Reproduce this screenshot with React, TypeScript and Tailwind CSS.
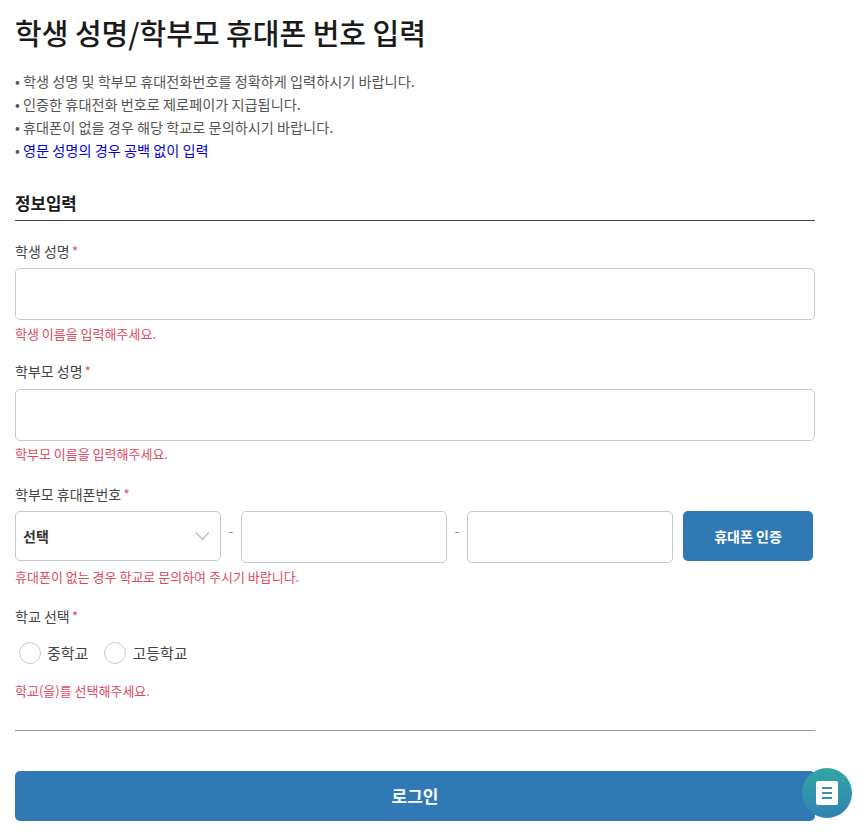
const font = { fontFamily: '"Noto Sans CJK KR", "Noto Sans", sans-serif' };

function Label({ text }: { text: string }) {
  return (
    <p className="text-[14px] leading-[20px] text-[#444]">
      {text}
      <span className="ml-[2px] text-[#e0566a]">*</span>
    </p>
  );
}

function Error({ text }: { text: string }) {
  return <p className="text-[13px] leading-[18px] text-[#e04a60]">{text}</p>;
}

function Radio({ text }: { text: string }) {
  return (
    <label className="flex items-center gap-[6px]">
      <span className="h-[22px] w-[22px] rounded-full border border-[#c9ccd4] bg-white" />
      <span className="text-[15px] leading-[22px] text-[#444]">{text}</span>
    </label>
  );
}

export default function App() {
  return (
    <div className="relative h-[833px] overflow-hidden bg-white pl-[15px]" style={font}>
      <div className="w-[800px]">
        <h1 className="pt-[11px] text-[29px] font-medium leading-[42px] text-[#1a1a1a]">
          학생 성명/학부모 휴대폰 번호 입력
        </h1>

        <ul className="mt-[17px] text-[14.2px] leading-[23px] text-[#555]">
          <li>• 학생 성명 및 학부모 휴대전화번호를 정확하게 입력하시기 바랍니다.</li>
          <li>• 인증한 휴대전화 번호로 제로페이가 지급됩니다.</li>
          <li>• 휴대폰이 없을 경우 해당 학교로 문의하시기 바랍니다.</li>
          <li>
            • <span className="text-[#0000e0]">영문 성명의 경우 공백 없이 입력</span>
          </li>
        </ul>

        <h2 className="mt-[29px] border-b border-[#444] pb-[5px] text-[16.8px] font-bold leading-[24px] text-[#1a1a1a]">
          정보입력
        </h2>

        <div className="mt-[20px]">
          <Label text="학생 성명" />
          <input className="mt-[7px] block h-[52px] w-full rounded-[5px] border border-[#c4c8d8] bg-white" />
          <div className="mt-[5px]">
            <Error text="학생 이름을 입력해주세요." />
          </div>
        </div>

        <div className="mt-[18px]">
          <Label text="학부모 성명" />
          <input className="mt-[8px] block h-[52px] w-full rounded-[5px] border border-[#c4c8d8] bg-white" />
          <div className="mt-[4px]">
            <Error text="학부모 이름을 입력해주세요." />
          </div>
        </div>

        <div className="mt-[21px]">
          <Label text="학부모 휴대폰번호" />
          <div className="mt-[7px] flex items-start">
            <div className="relative flex h-[50px] w-[206px] items-center rounded-[5px] border border-[#c4c8d8] bg-white pl-[7px] text-[14px] font-bold text-[#333]">
              선택
              <svg className="absolute right-[10px] top-[19px]" width="15" height="10" viewBox="0 0 15 10" fill="none">
                <path d="M1 1.5 L7.5 8.5 L14 1.5" stroke="#b8bcc8" strokeWidth="1.2" />
              </svg>
            </div>
            <span className="w-[20px] pt-[9px] text-center text-[14px] leading-[20px] text-[#888]">-</span>
            <input className="block h-[52px] w-[206px] rounded-[5px] border border-[#c4c8d8] bg-white" />
            <span className="w-[20px] pt-[9px] text-center text-[14px] leading-[20px] text-[#888]">-</span>
            <input className="block h-[52px] w-[206px] rounded-[5px] border border-[#c4c8d8] bg-white" />
            <button className="ml-[10px] h-[50px] w-[130px] rounded-[5px] bg-[#3079b5] text-[14px] font-bold text-white">
              휴대폰 인증
            </button>
          </div>
          <div className="mt-[5px]">
            <Error text="휴대폰이 없는 경우 학교로 문의하여 주시기 바랍니다." />
          </div>
        </div>

        <div className="mt-[20px]">
          <Label text="학교 선택" />
          <div className="mt-[16px] flex gap-[16px] pl-[4px]">
            <Radio text="중학교" />
            <Radio text="고등학교" />
          </div>
          <div className="mt-[18px]">
            <Error text="학교(을)를 선택해주세요." />
          </div>
        </div>

        <div className="mt-[30px] border-t border-[#999]" />

        <button className="mt-[40px] h-[50px] w-full rounded-[5px] bg-[#3079b5] text-[17px] font-bold text-white">
          로그인
        </button>
      </div>

      <div className="absolute left-[802px] top-[768px] flex h-[50px] w-[50px] items-center justify-center rounded-full bg-gradient-to-b from-[#33a6a6] to-[#2f82b0]">
        <div className="flex h-[24px] w-[22px] flex-col items-center justify-center gap-[3px] rounded-[2px] bg-white">
          <span className="h-[2px] w-[10px] bg-[#3a8fae]" />
          <span className="h-[2px] w-[10px] bg-[#3a8fae]" />
          <span className="h-[2px] w-[10px] bg-[#3a8fae]" />
        </div>
      </div>
    </div>
  );
}
